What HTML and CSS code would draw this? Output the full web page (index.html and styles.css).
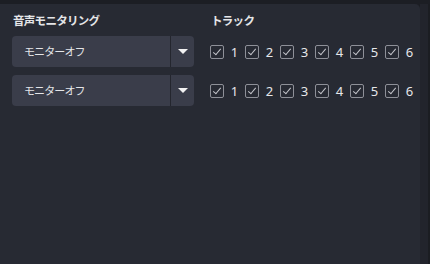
FILE: index.html
```html
<!DOCTYPE html>
<html>
<head>
<meta charset="utf-8" />
<title>音声モニタリング</title>
<link rel="stylesheet" href="styles.css">
</head>
<body>
<div class="frame">
	<div class="panel">
		<div class="col col-mon">
			<div class="head">音声モニタリング</div>
			<div class="select"><span class="val">モニターオフ</span><span class="btn"><i class="caret"></i></span></div>
			<div class="select"><span class="val">モニターオフ</span><span class="btn"><i class="caret"></i></span></div>
		</div>
		<div class="col col-track">
			<div class="head">トラック</div>
			<div class="tracks">
				<span class="cb"></span><span class="num">1</span>
				<span class="cb"></span><span class="num">2</span>
				<span class="cb"></span><span class="num">3</span>
				<span class="cb"></span><span class="num">4</span>
				<span class="cb"></span><span class="num">5</span>
				<span class="cb"></span><span class="num">6</span>
			</div>
			<div class="tracks">
				<span class="cb"></span><span class="num">1</span>
				<span class="cb"></span><span class="num">2</span>
				<span class="cb"></span><span class="num">3</span>
				<span class="cb"></span><span class="num">4</span>
				<span class="cb"></span><span class="num">5</span>
				<span class="cb"></span><span class="num">6</span>
			</div>
		</div>
	</div>
	<div class="gutter"></div>
</div>
</body>
</html>
```

FILE: styles.css
```css
html, body { margin: 0; height: 100%; background: #1c1e24; }
body { font-family: "Noto Sans CJK JP", "Noto Sans", sans-serif; color: #e4e5e8; }

.frame { display: flex; height: 100%; padding-top: 4px; box-sizing: border-box; }
.panel {
	flex: 1;
	display: flex;
	background: #272a33;
	border-radius: 0 5px 0 0;
	padding: 7px 0 0 12px;
}
.gutter { width: 10px; background: #22242c; border-right: 2px solid #1b1d22; }

.col-mon { width: 182px; margin-right: 16px; }
.col-track { flex: 1; }
.head { font-size: 11.5px; font-weight: bold; line-height: 18px; height: 18px; margin-bottom: 7px; padding-left: 1px; letter-spacing: -0.7px; }

.select {
	display: flex;
	height: 31px;
	background: #3a3d4a;
	border-radius: 4px;
	margin-bottom: 8px;
	font-size: 11px;
}
	.select .val { flex: 1; line-height: 31px; padding-left: 12px; letter-spacing: -0.9px; }
	.select .btn { width: 23px; border-left: 1px solid #24262e; display: flex; align-items: center; justify-content: center; }
	.select .caret { width: 0; height: 0; border-left: 5px solid transparent; border-right: 5px solid transparent; border-top: 5px solid #f2f2f2; }

.tracks { display: flex; align-items: center; height: 31px; margin-bottom: 8px; font-size: 13px; }
	.tracks .cb {
		width: 12px; height: 12px;
		border: 1px solid #8e9098;
		border-radius: 2px;
		position: relative;
	}
	.tracks .cb::after {
		content: "";
		position: absolute;
		left: 4px; top: 1px;
		width: 3px; height: 7px;
		border: solid #c4c5cb;
		border-width: 0 1.5px 1.5px 0;
		transform: rotate(40deg);
	}
	.tracks .num { width: 21px; text-align: center; font-family: "Noto Sans", sans-serif; color: #e6e7ea; }
```
